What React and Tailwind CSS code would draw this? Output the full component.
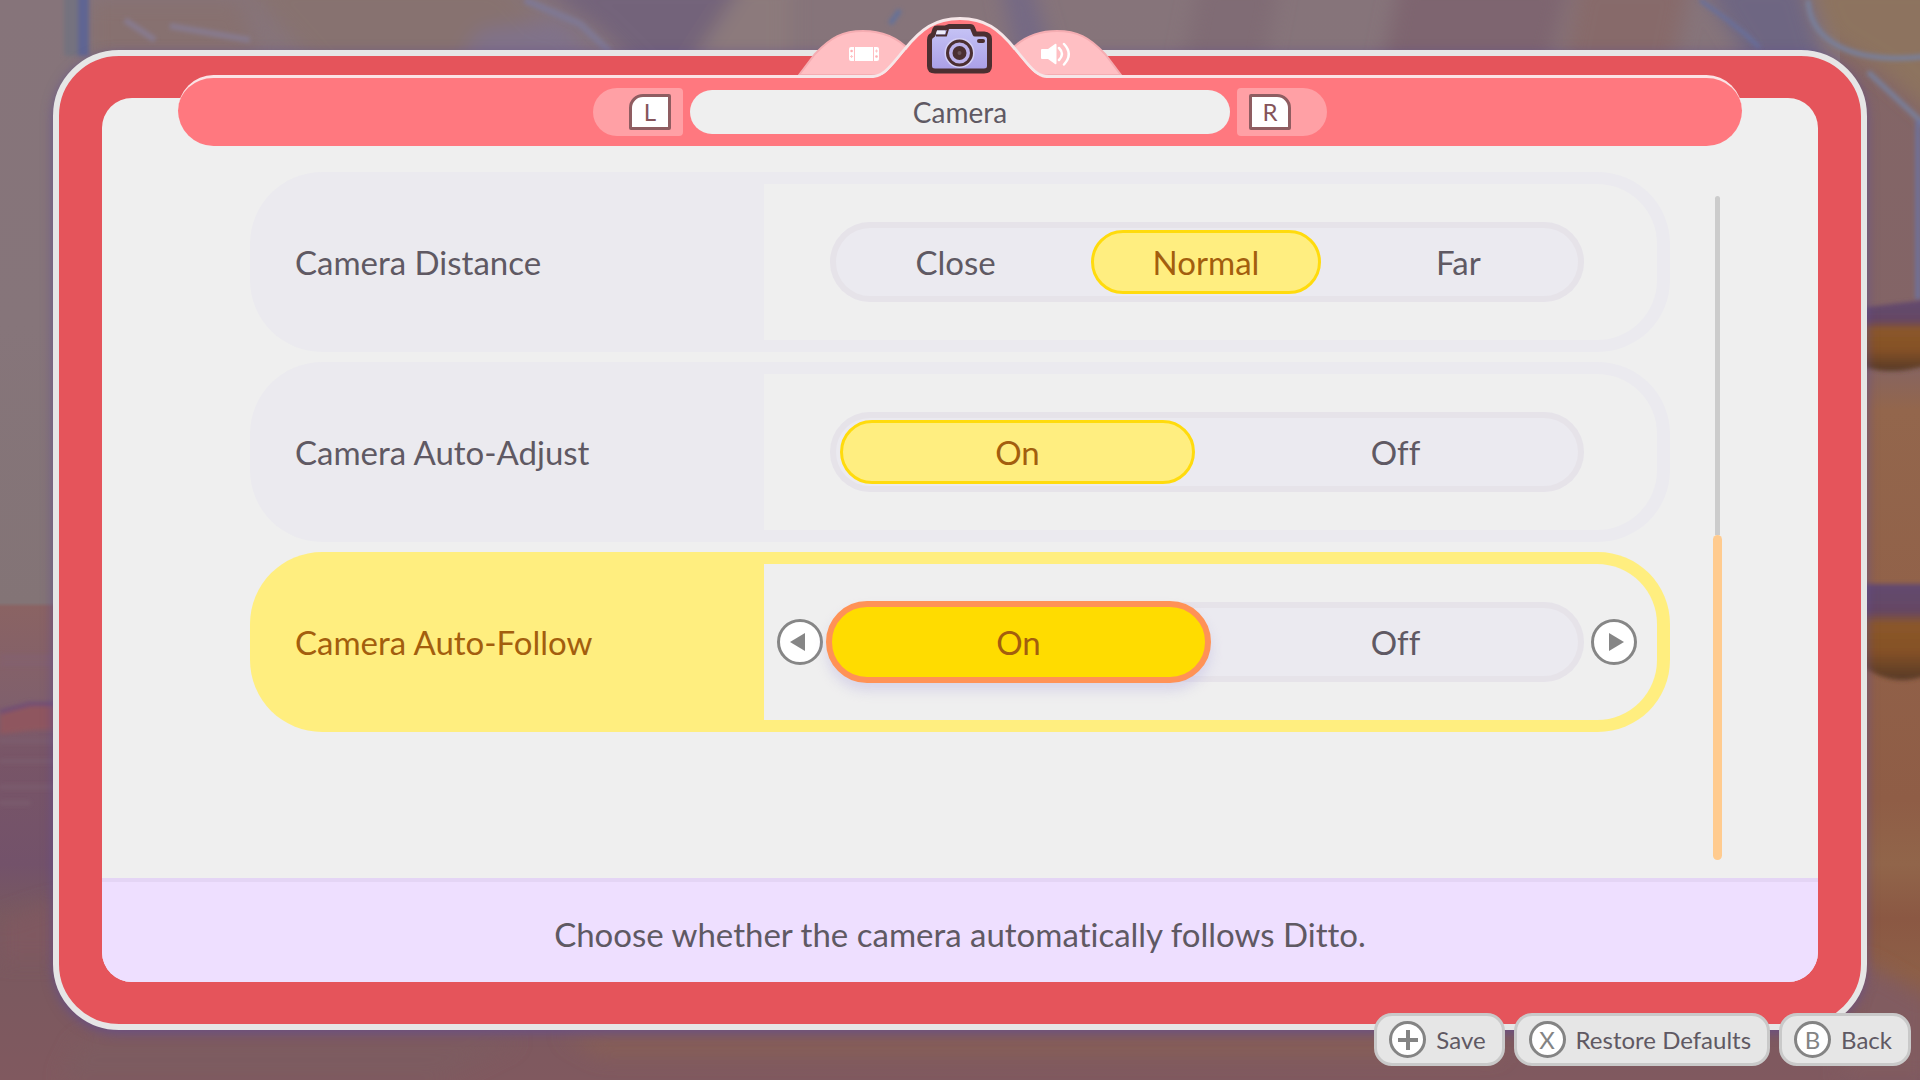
import React, { useState } from "react";

const settings = [
  { id: "distance", label: "Camera Distance", options: ["Close", "Normal", "Far"] },
  { id: "adjust", label: "Camera Auto-Adjust", options: ["On", "Off"] },
  { id: "follow", label: "Camera Auto-Follow", options: ["On", "Off"] },
];

const descriptions = {
  distance: "Choose how far the camera is from Ditto.",
  adjust: "Choose whether the camera adjusts automatically.",
  follow: "Choose whether the camera automatically follows Ditto.",
};

const Backdrop = () => (
  <svg
    className="absolute inset-0 h-full w-full"
    viewBox="0 0 1920 1080"
    preserveAspectRatio="none"
    aria-hidden="true"
  >
    <defs>
      <linearGradient id="sky" x1="0" y1="0" x2="0" y2="1">
        <stop offset="0" stopColor="#86747a" />
        <stop offset="0.3" stopColor="#86757a" />
        <stop offset="0.558" stopColor="#837476" />
        <stop offset="0.562" stopColor="#8a6363" />
        <stop offset="0.65" stopColor="#80606c" />
        <stop offset="0.7" stopColor="#785567" />
        <stop offset="0.8" stopColor="#73526a" />
        <stop offset="0.85" stopColor="#78595f" />
        <stop offset="1" stopColor="#80595f" />
      </linearGradient>
      <linearGradient id="wood" x1="0" y1="0" x2="0" y2="1">
        <stop offset="0" stopColor="#836667" />
        <stop offset="0.33" stopColor="#836466" />
        <stop offset="0.38" stopColor="#93664c" />
        <stop offset="0.74" stopColor="#8f5d46" />
        <stop offset="0.8" stopColor="#91654a" />
        <stop offset="0.85" stopColor="#8b5843" />
        <stop offset="0.9" stopColor="#8d5f47" />
        <stop offset="1" stopColor="#7d5860" />
      </linearGradient>
      <linearGradient id="log" x1="0" y1="0" x2="0" y2="1">
        <stop offset="0" stopColor="#644a70" />
        <stop offset="0.28" stopColor="#654764" />
        <stop offset="0.42" stopColor="#8b5729" />
        <stop offset="0.7" stopColor="#855128" />
        <stop offset="1" stopColor="#573a28" />
      </linearGradient>
      <filter id="soft" x="-20%" y="-20%" width="140%" height="140%">
        <feGaussianBlur stdDeviation="10" />
      </filter>
      <filter id="edge">
        <feGaussianBlur stdDeviation="2" />
      </filter>
    </defs>
    <rect width="1920" height="1080" fill="url(#sky)" />
    <rect x="1840" width="80" height="1080" fill="url(#wood)" />
    <g filter="url(#soft)">
      <path d="M90 0H240L260 60H90Z" fill="#87716f" />
      <path d="M240 -20H500L600 80H330Z" fill="#877270" />
      <path d="M480 30L560 20L600 60H460Z" fill="#80728a" />
      <path d="M530 -20H745L690 80H650L600 30Z" fill="#73647a" />
      <path d="M745 -20H790V80H680Z" fill="#8c7a7c" />
      <path d="M1000 -20H1030L1060 80H1020Z" fill="#756984" />
      <path d="M1200 -20H1280L1260 80H1180Z" fill="#806c74" />
      <path d="M1400 -20H1570L1545 80H1380Z" fill="#7e6570" />
      <path d="M1580 -20H1690L1670 80H1560Z" fill="#876a6a" />
      <path d="M1700 -20H1800L1830 80H1760Z" fill="#6e6682" />
      <path d="M1805 -20H1950V130L1880 70L1830 40Z" fill="#8d735f" />
      <path d="M0 920L60 900V960H0Z" fill="#7f5960" />
      <path d="M80 1040H520L440 1080H60Z" fill="#7d5c60" />
      <path d="M560 1034H1500V1056H600Z" fill="#875f56" />
      <path d="M1860 960L1930 1000V1080H1840Z" fill="#815c61" />
    </g>
    <g filter="url(#edge)" fill="none">
      <rect x="64" y="-10" width="14" height="66" fill="#74727f" />
      <rect x="78" y="-10" width="11" height="66" fill="#5f6593" />
      <path d="M125 20L155 40M170 26L250 40" stroke="#877a8e" strokeWidth="6" />
      <path d="M525 0L580 24L610 52" stroke="#7f7893" strokeWidth="7" />
      <path d="M890 24L900 10" stroke="#64719a" strokeWidth="5" />
      <path d="M1700 0L1725 18L1745 34L1760 48" stroke="#67709d" strokeWidth="4" />
      <path d="M1808 0C1810 40 1850 66 1930 56M1868 72L1925 125" stroke="#78809c" strokeWidth="5" />
      <path d="M1918 120V300" stroke="#6c729e" strokeWidth="5" />
      <path d="M0 657H56M0 664H56" stroke="#83616f" strokeWidth="4" />
      <path d="M0 714L30 706H58V730H36L0 734Z" fill="#8f575e" />
      <path d="M0 712L30 704H56" stroke="#6f4d76" strokeWidth="4" />
      <path d="M0 741H56M0 761H56M0 787H56M0 803H30" stroke="#7d6070" strokeWidth="3" />
    </g>
    <g filter="url(#edge)">
      <path d="M1860 308L1925 300V366Q1890 376 1860 366Z" fill="url(#log)" />
      <path d="M1860 584H1925V676Q1890 688 1860 664Z" fill="url(#log)" />
    </g>
  </svg>
);

const HandheldIcon = () => (
  <svg width="30" height="14" viewBox="0 0 30 14" aria-hidden="true">
    <path d="M2 0H5V14H2Q0 14 0 12V2Q0 0 2 0ZM6 0H24V14H6ZM25 0H28Q30 0 30 2V12Q30 14 28 14H25Z" fill="#fff" />
    <circle cx="2.6" cy="4" r="1.3" fill="#ffaeb3" />
    <circle cx="27.5" cy="9.5" r="1.3" fill="#ffaeb3" />
    <path d="M2.6 8v3M1.1 9.5h3M27.5 2.5v3M26 4h3" stroke="#ffc4c7" strokeWidth="1" />
  </svg>
);

const CameraIcon = () => (
  <svg width="66" height="50" viewBox="0 0 66 50" aria-hidden="true">
    <defs>
      <linearGradient id="camBody" x1="0" y1="0" x2="0" y2="1">
        <stop offset="0" stopColor="#c6c4f6" />
        <stop offset="1" stopColor="#aa9ee6" />
      </linearGradient>
    </defs>
    <path
      d="M8 5Q8.500 4 10 4H18L22 2.500H43Q45 2.500 45.500 4L48 10H57Q62.500 10.500 62.500 15V42Q62.500 47 57 47H8Q2.500 47 2.500 42V16Q2.500 12 6 11Z"
      fill="url(#camBody)"
      stroke="#4b2f31"
      strokeWidth="5"
      strokeLinejoin="round"
    />
    <path d="M10 6.500H18V10H9Z" fill="#eeedfa" />
    <path d="M9 11.500H19L21 5" fill="none" stroke="#4b2f31" strokeWidth="2" />
    <circle cx="32.500" cy="29" r="15" fill="#d4cff6" />
    <circle cx="32.500" cy="29" r="12" fill="#bdb2ec" stroke="#4b2f31" strokeWidth="3" />
    <circle cx="32.500" cy="29" r="7" fill="#4b2f31" />
    <circle cx="32.500" cy="29" r="2" fill="#6a5258" />
    <rect x="50" y="15" width="8" height="4" rx="2" fill="#4b2f31" />
  </svg>
);

const SpeakerIcon = () => (
  <svg width="30" height="24" viewBox="0 0 30 24" fill="none" aria-hidden="true">
    <path d="M1 7H7L14 2Q15.500 1 15.500 3V21Q15.500 23 14 22L7 17H1Q0 17 0 16V8Q0 7 1 7Z" fill="#fff" />
    <path d="M18 6Q24 12 18 18M23 2Q32.500 12 23 22.500" stroke="#fff" strokeWidth="2.500" strokeLinecap="round" />
  </svg>
);

const TabBar = () => (
  <nav className="absolute -top-[62px] left-1/2 h-[62px] w-[326px] -translate-x-1/2">
    <svg className="absolute inset-0" width="326" height="62" viewBox="0 0 326 62" aria-hidden="true">
      <g fill="#ffbfc3" stroke="#f5adb2" strokeWidth="2">
        <path d="M2 59L18 38C34 21 46 15 66 15C86 15 100 21 112 34L132 59Z" />
        <path d="M324 59L308 38C292 21 280 15 260 15C240 15 226 21 214 34L194 59Z" />
      </g>
      <path d="M0 60.500H74C87 60.500 92 52 108 33C124 13 138 2.500 163 2.500C188 2.500 202 13 218 33C234 52 239 60.500 252 60.500H326" fill="#ff787f" stroke="#f6e6e8" strokeWidth="3" />
      <path d="M74 62C88 62 93 53 109 34L217 34C233 53 238 62 252 62Z" fill="#ff787f" />
    </svg>
    <div className="relative flex h-full justify-center">
      <button className="flex w-24 items-center justify-center pt-[14px]" aria-label="System">
        <HandheldIcon />
      </button>
      <button className="flex w-24 items-center justify-center pt-1" aria-label="Camera">
        <CameraIcon />
      </button>
      <button className="flex w-24 items-center justify-center pt-[14px]" aria-label="Sound">
        <SpeakerIcon />
      </button>
    </div>
  </nav>
);

const Header = () => (
  <header className="relative mx-[76px] -mt-[23px] flex items-center justify-center gap-[7px] rounded-[36px] border-t-[3px] border-[#fbe3e5] bg-[#ff787f] py-[10px]">
    <TabBar />
    <button className="flex h-12 w-[90px] items-center justify-end rounded-l-[24px] rounded-r-[4px] bg-[#ffa0a5] pr-3" aria-label="Previous page">
      <span className="flex h-9 w-[42px] items-center justify-center rounded-[2px] rounded-tl-[14px] border-[3px] border-[#8f5d61] bg-white text-[24px] leading-none text-[#85545a]">
        L
      </span>
    </button>
    <h1 className="flex h-11 w-[540px] items-center justify-center rounded-full bg-[#efefef] text-[28px] leading-none">
      Camera
    </h1>
    <button className="flex h-12 w-[90px] items-center rounded-l-[4px] rounded-r-[24px] bg-[#ffa0a5] pl-3" aria-label="Next page">
      <span className="flex h-9 w-[42px] items-center justify-center rounded-[2px] rounded-tr-[14px] border-[3px] border-[#8f5d61] bg-white text-[24px] leading-none text-[#85545a]">
        R
      </span>
    </button>
  </header>
);

const Arrow = ({ dir, hidden, onClick }) => (
  <button
    onClick={onClick}
    aria-label={dir === "left" ? "Previous option" : "Next option"}
    className={`flex h-[46px] w-[46px] shrink-0 items-center justify-center rounded-full border-[3px] border-[#868686] bg-white ${hidden ? "invisible" : ""}`}
  >
    <svg width="20" height="20" viewBox="0 0 20 20" aria-hidden="true">
      <path d={dir === "left" ? "M15 1V19L0 10Z" : "M5 1V19L20 10Z"} fill="#868686" />
    </svg>
  </button>
);

const SettingRow = ({ setting, value, active, onFocus, onChange }) => {
  const { id, label, options } = setting;
  const index = options.indexOf(value);
  const step = (n) => onChange(options[(index + n + options.length) % options.length]);

  const pill = (selected) => {
    if (!selected) return "mx-3 my-2";
    if (active) return "-mx-1 -my-px border-[6px] border-[#ff9256] bg-[#ffdc00] text-[#a35e0e] shadow-[0_8px_12px_rgba(190,185,225,0.45)]";
    return "mr-3 ml-[10px] my-2 border-[3px] border-[#ffdb0d] bg-[#ffee80] text-[#a35e0e]";
  };

  return (
    <div onClick={onFocus} className={`flex h-[180px] rounded-[72px] ${active ? "bg-[#ffee7f]" : "bg-[#ebeaef]"}`}>
      <div id={`${id}-label`} className={`flex w-[514px] shrink-0 items-center pl-[45px] ${active ? "text-[#a35e0e]" : ""}`}>
        {label}
      </div>
      <div className="my-3 mr-[13px] flex flex-1 items-center gap-[7px] rounded-r-[60px] bg-[#efefef] pr-5 pl-[13px]">
        <Arrow dir="left" hidden={!active} onClick={() => step(-1)} />
        <div
          role="radiogroup"
          aria-labelledby={`${id}-label`}
          className="flex h-20 flex-1 rounded-full bg-[#ebeaf0] shadow-[inset_0_0_0_6px_#e6e3e9]"
        >
          {options.map((option) => (
            <label key={option} className="flex flex-1 cursor-pointer">
              <input
                type="radio"
                name={id}
                className="peer sr-only"
                checked={option === value}
                onChange={() => onChange(option)}
              />
              <span className={`flex flex-1 items-center justify-center rounded-full ${pill(option === value)}`}>
                {option}
              </span>
            </label>
          ))}
        </div>
        <Arrow dir="right" hidden={!active} onClick={() => step(1)} />
      </div>
    </div>
  );
};

const Hint = ({ glyph, children }) => (
  <button className="flex h-[53px] items-center gap-[10px] rounded-[18px] border-[3px] border-[#c9c9c9] bg-[#e6e6e6] pr-4 pl-3 text-[24px] leading-none">
    <span className="flex h-[37px] w-[37px] items-center justify-center rounded-full border-[3px] border-[#848484] bg-white text-[24px] leading-none text-[#848484]">
      {glyph}
    </span>
    {children}
  </button>
);

const PlusGlyph = () => (
  <svg width="20" height="20" viewBox="0 0 20 20" aria-hidden="true">
    <path d="M10 0V20M0 10H20" stroke="#848484" strokeWidth="4" />
  </svg>
);

const App = () => {
  const [active, setActive] = useState("follow");
  const [values, setValues] = useState({ distance: "Normal", adjust: "On", follow: "On" });

  return (
    <div className="relative flex min-h-screen flex-col overflow-hidden bg-[#7f6a70] px-[53px] py-[50px] font-['Lato',sans-serif] text-[33px] leading-none text-[#5f5963] [font-variant-ligatures:none]">
      <Backdrop />
      <div className="relative flex flex-1 flex-col rounded-[66px] border-[6px] border-[#e6e6e6] bg-[#e5545b] px-[43px] py-[42px] shadow-[0_3px_12px_rgba(95,75,150,0.7)]">
        <div className="flex flex-1 flex-col rounded-[30px] bg-[#efefef]">
          <Header />
          <main className="flex flex-1 pt-[26px] pl-[148px]">
            <div className="flex flex-1 flex-col gap-[10px]">
              {settings.map((setting) => (
                <SettingRow
                  key={setting.id}
                  setting={setting}
                  value={values[setting.id]}
                  active={active === setting.id}
                  onFocus={() => setActive(setting.id)}
                  onChange={(next) => setValues({ ...values, [setting.id]: next })}
                />
              ))}
            </div>
            <div className="mt-6 mr-24 mb-[18px] ml-[43px] flex w-[9px] flex-col items-center">
              <div className="w-[5px] flex-[51] rounded-t-full bg-[#cccccc]" />
              <div className="w-[9px] flex-[49] rounded-full bg-[#ffcb8f]" />
            </div>
          </main>
          <p className="flex h-[104px] items-center justify-center rounded-b-[30px] border-t-[4px] border-[#e4d5f5] bg-[#eedfff] pt-1">
            {descriptions[active]}
          </p>
        </div>
      </div>
      <footer className="absolute right-[9px] bottom-[14px] flex gap-[9px]">
        <Hint glyph={<PlusGlyph />}>Save</Hint>
        <Hint glyph="X">Restore Defaults</Hint>
        <Hint glyph="B">Back</Hint>
      </footer>
    </div>
  );
};

export default App;
